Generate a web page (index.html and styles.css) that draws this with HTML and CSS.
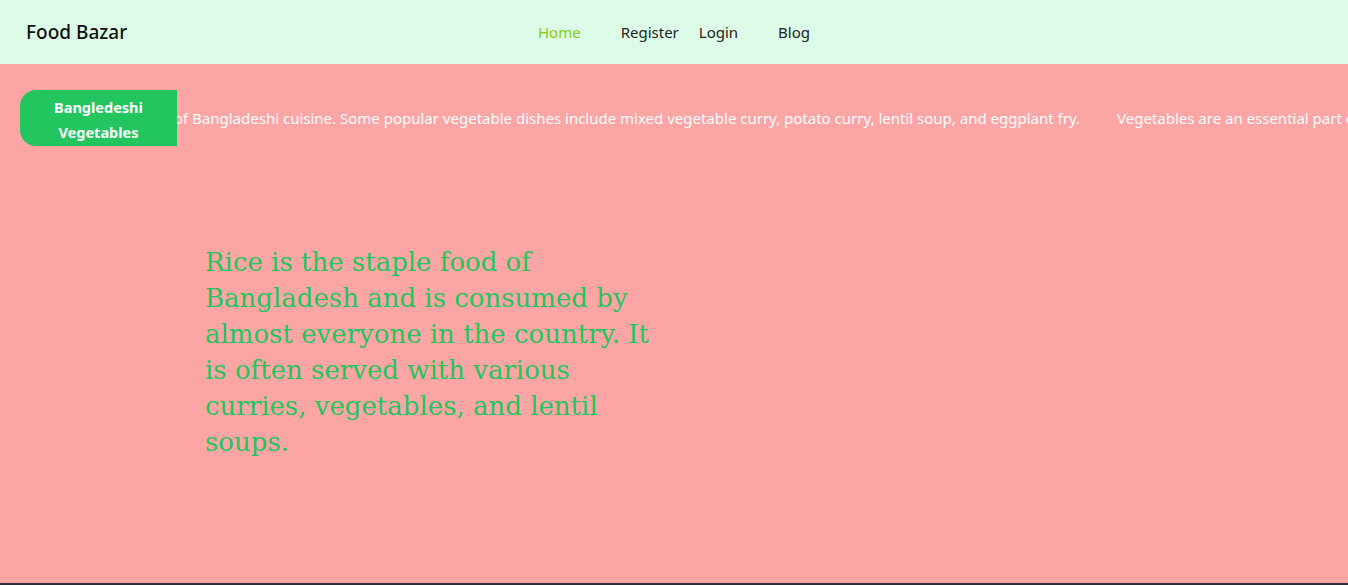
FILE: index.html
```html
<!DOCTYPE html>
<html lang="en">
<head>
<meta charset="utf-8">
<title>Food Bazar</title>
<link rel="stylesheet" href="styles.css">
</head>
<body>
<header class="navbar">
  <a class="brand" href="#">Food Bazar</a>
  <nav class="menu">
    <a class="link active" href="#">Home</a>
    <span class="pair">
      <a class="link" href="#">Register</a>
      <a class="link" href="#">Login</a>
    </span>
    <a class="link" href="#">Blog</a>
  </nav>
  <div class="end"></div>
</header>
<main class="hero">
  <div class="ticker">
    <div class="badge"><span>Bangledeshi</span><span>Vegetables</span></div>
    <div class="viewport">
      <div class="lead">
        <span class="item">Vegetables are an essential part of Bangladeshi cuisine. Some popular vegetable dishes include mixed vegetable curry, potato curry, lentil soup, and eggplant fry.</span>
      </div>
      <span class="item next">Vegetables are an essential part of Bangladeshi cuisine. Some popular vegetable dishes include mixed vegetable curry, potato curry, lentil soup, and eggplant fry.</span>
    </div>
  </div>
  <p class="rice">Rice is the staple food of Bangladesh and is consumed by almost everyone in the country. It is often served with various curries, vegetables, and lentil soups.</p>
</main>
<footer class="footer"></footer>
</body>
</html>
```
FILE: styles.css
```css
* { box-sizing: border-box; }
body {
  margin: 0;
  font-family: "Noto Sans", "Open Sans", sans-serif;
}
a { text-decoration: none; color: inherit; }
.navbar {
  height: 64px;
  background: #dcfce7;
  display: grid;
  grid-template-columns: 1fr auto 1fr;
  align-items: center;
  padding: 0 26px;
}
.brand {
  font-size: 19px;
  color: #111;
  font-weight: 500;
}
.menu {
  display: flex;
  align-items: center;
  gap: 40px;
  font-size: 15px;
  color: #222;
}
.pair { display: flex; gap: 20px; }
.active { color: #84cc16; }
.hero {
  background: #fca5a5;
  height: 519px;
  padding-top: 26px;
}
.ticker {
  display: flex;
  align-items: center;
  padding-left: 20px;
}
.badge {
  flex: none;
  width: 157px;
  height: 56px;
  background: #22c55e;
  color: #fff;
  font-weight: 700;
  font-size: 14.5px;
  line-height: 20px;
  text-align: center;
  display: flex;
  flex-direction: column;
  align-items: center;
  justify-content: center;
  gap: 5px;
  padding-top: 2px;
  border-radius: 16px 0 0 16px;
}
.viewport {
  flex: 1;
  overflow: hidden;
  display: flex;
  align-items: center;
  color: #fff;
  font-size: 15px;
  white-space: nowrap;
}
.lead {
  flex: none;
  width: 903px;
  display: flex;
  justify-content: flex-end;
}
.item { flex: none; }
.next { margin-left: 37px; }
.rice {
  margin: 98px 0 0 205px;
  width: 452px;
  font-family: "DejaVu Serif", Georgia, serif;
  font-size: 26px;
  line-height: 36px;
  color: #22c55e;
}
.footer {
  height: 120px;
  background: #2a2e37;
}
```
